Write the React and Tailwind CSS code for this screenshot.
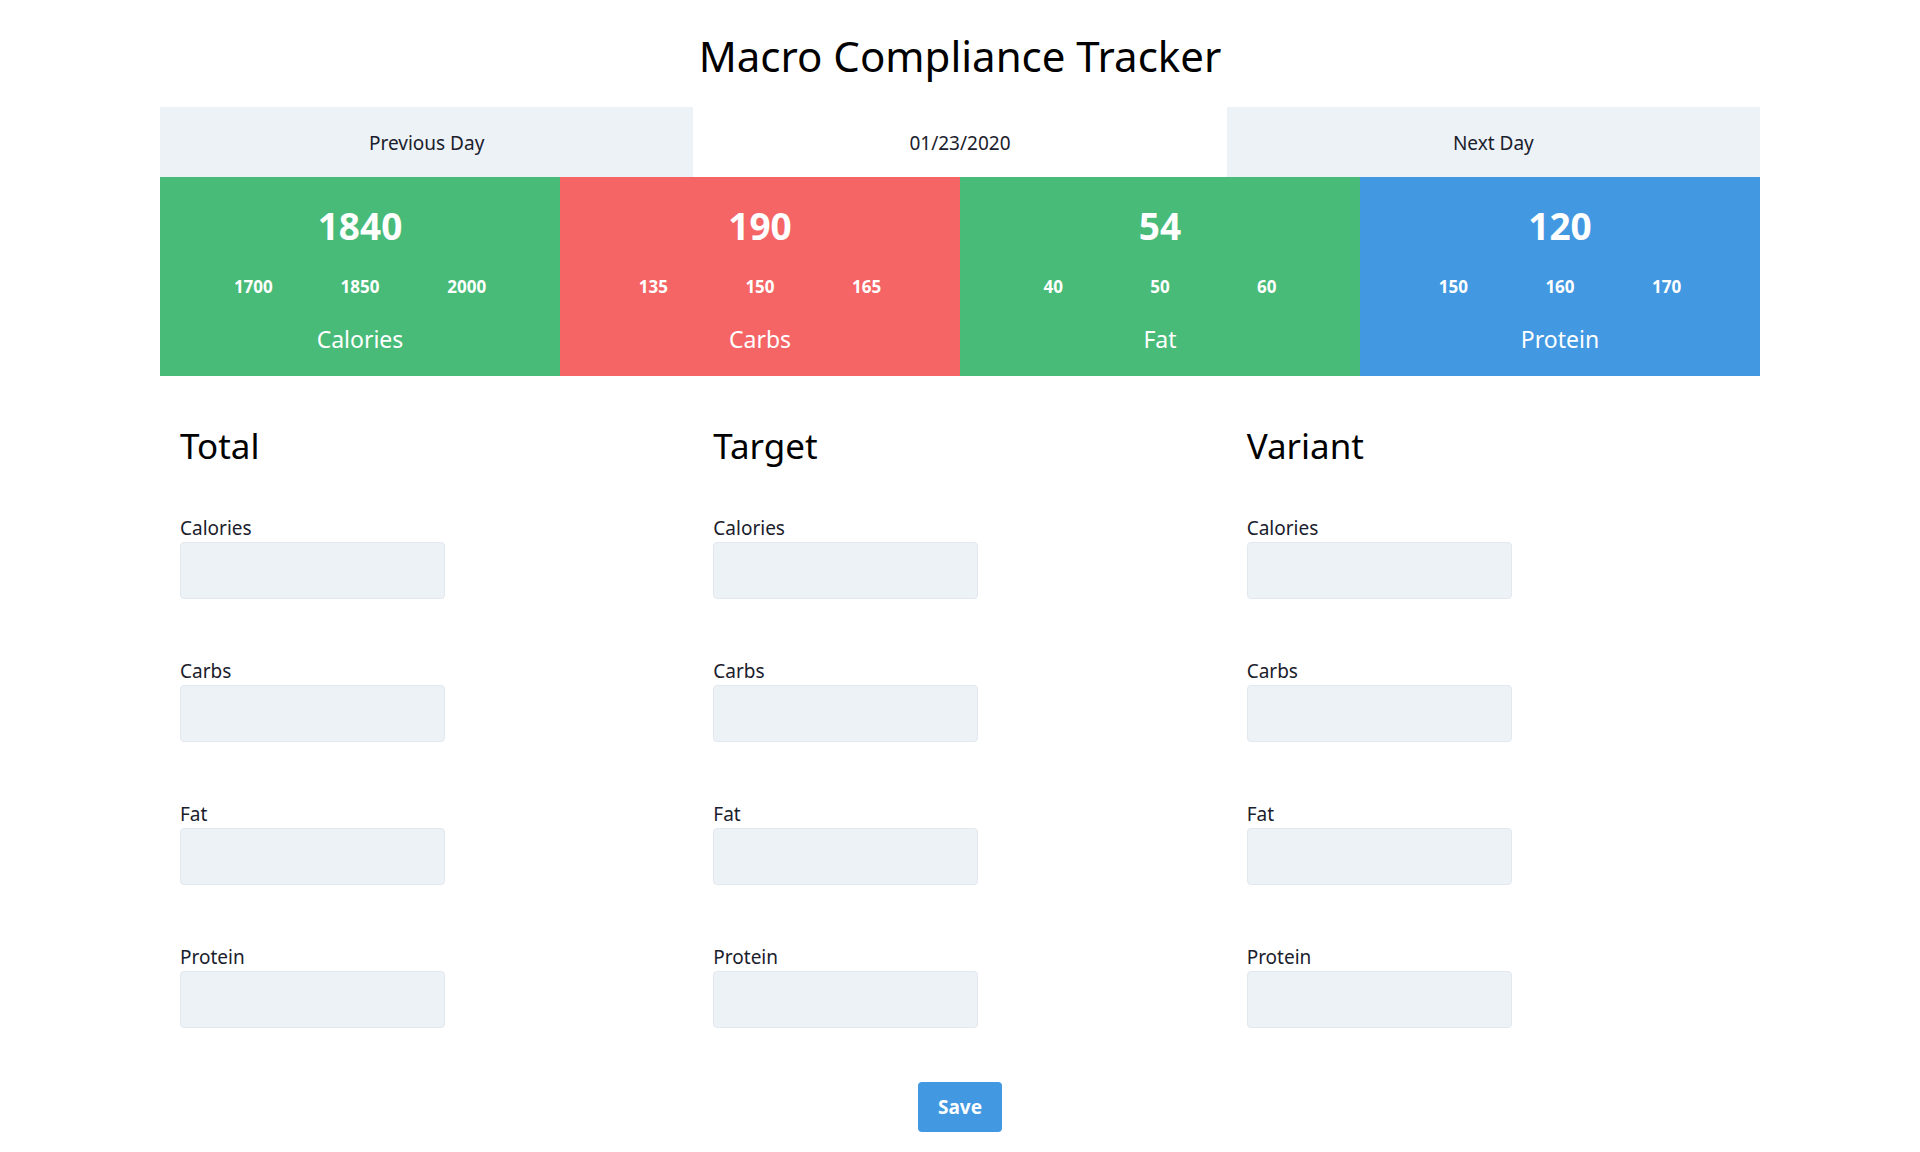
import React from "react";

const macros = [
  { total: 1840, range: [1700, 1850, 2000], label: "Calories", color: "bg-[#48bb78]" },
  { total: 190, range: [135, 150, 165], label: "Carbs", color: "bg-[#f56565]" },
  { total: 54, range: [40, 50, 60], label: "Fat", color: "bg-[#48bb78]" },
  { total: 120, range: [150, 160, 170], label: "Protein", color: "bg-[#4299e1]" },
];

const columns = ["Total", "Target", "Variant"];
const fields = ["Calories", "Carbs", "Fat", "Protein"];

const MacroCard = ({ total, range, label, color }) => (
  <div className={`${color} h-[199px] flex flex-col items-center text-white pt-[27px]`}>
    <div className="text-[37px] font-bold leading-[44px]">{total}</div>
    <div className="grid grid-cols-3 w-[320px] mt-[27px]">
      {range.map((n) => (
        <div key={n} className="text-center text-[17px] font-bold leading-[24px]">
          {n}
        </div>
      ))}
    </div>
    <div className="text-[23px] leading-[32px] mt-[24px]">{label}</div>
  </div>
);

const App = () => {
  return (
    <div className="w-[1920px] h-[1152px] bg-white text-[#1a202c] font-['Noto_Sans',sans-serif]">
      <div className="w-[1600px] mx-auto">
        <h1 className="h-[107px] flex items-center justify-center pt-[4px] text-[42px] font-normal text-black">
          Macro Compliance Tracker
        </h1>
        <div className="grid grid-cols-3 h-[70px] text-[19px]">
          <div className="bg-[#edf2f7] flex items-center justify-center pt-[2px]">Previous Day</div>
          <div className="bg-white flex items-center justify-center pt-[2px]">01/23/2020</div>
          <div className="bg-[#edf2f7] flex items-center justify-center pt-[2px]">Next Day</div>
        </div>
        <div className="grid grid-cols-4">
          {macros.map((m) => (
            <MacroCard key={m.label} {...m} />
          ))}
        </div>
        <div className="grid grid-cols-3 mt-[48px]">
          {columns.map((col) => (
            <div key={col} className="px-5">
              <h2 className="text-[35px] leading-[44px] text-black">{col}</h2>
              <div className="mt-[48px] flex flex-col gap-[60px]">
                {fields.map((f) => (
                  <div key={f}>
                    <label className="block text-[19px] leading-[24px]">{f}</label>
                    <input
                      type="text"
                      className="mt-[2px] block w-[265px] h-[57px] bg-[#edf2f7] border border-[#e2e8f0] rounded-[4px] outline-none px-3"
                    />
                  </div>
                ))}
              </div>
            </div>
          ))}
        </div>
        <div className="flex justify-center mt-[54px]">
          <button className="w-[84px] h-[50px] bg-[#4299e1] text-white font-bold text-[19px] rounded-[4px]">
            Save
          </button>
        </div>
      </div>
    </div>
  );
};

export default App;
